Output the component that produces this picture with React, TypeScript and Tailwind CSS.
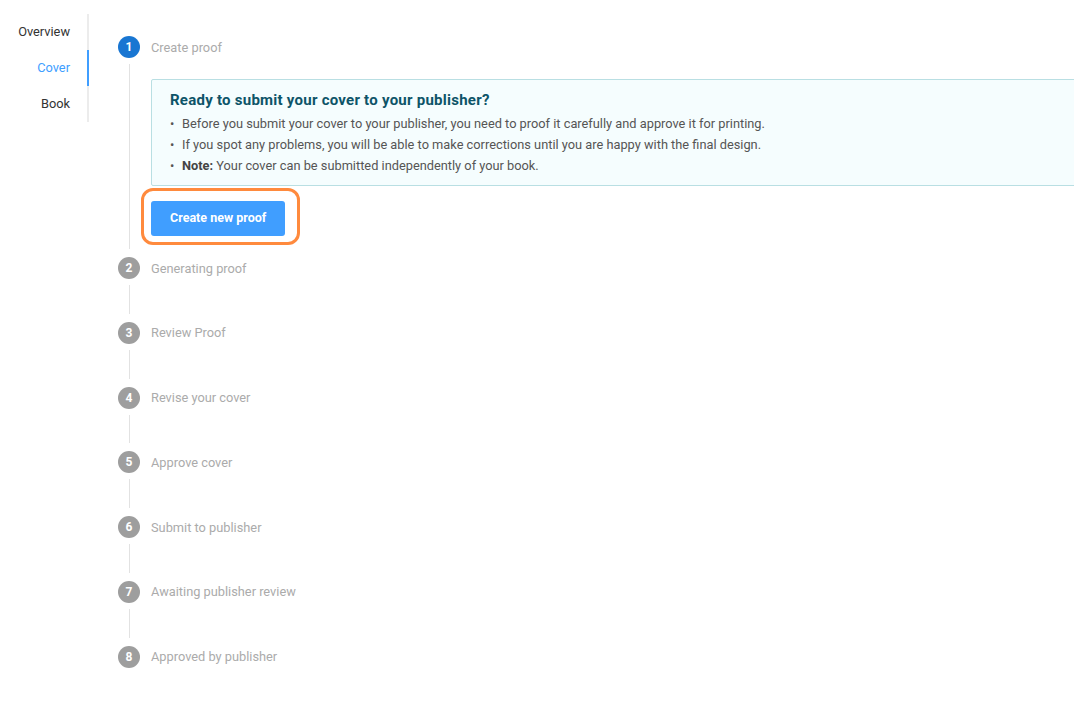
import React from "react";

const navItems = [
  { label: "Overview", active: false },
  { label: "Cover", active: true },
  { label: "Book", active: false },
];

const steps = [
  "Create proof",
  "Generating proof",
  "Review Proof",
  "Revise your cover",
  "Approve cover",
  "Submit to publisher",
  "Awaiting publisher review",
  "Approved by publisher",
];

function ProofCard() {
  return (
    <div className="pt-[21px] pb-[21px]">
      <div className="w-[940px] border border-[#b9dfe3] bg-[#f5fdfe] rounded-[2px] pl-[18px] pt-[10px] pb-[9px]">
        <h3 className="text-[15px] leading-[21px] font-bold text-[#0d5468] tracking-[0.25px]">
          Ready to submit your cover to your publisher?
        </h3>
        <ul className="mt-[2px] text-[12.8px] leading-[21px] text-[#555]">
          <li className="flex">
            <span className="w-[12px]">•</span>
            Before you submit your cover to your publisher, you need to proof it carefully and approve it for printing.
          </li>
          <li className="flex">
            <span className="w-[12px]">•</span>
            If you spot any problems, you will be able to make corrections until you are happy with the final design.
          </li>
          <li className="flex">
            <span className="w-[12px]">•</span>
            <span>
              <b className="font-bold text-[#444]">Note:</b> Your cover can be submitted independently of your book.
            </span>
          </li>
        </ul>
      </div>
      <div className="relative mt-[15px] w-fit">
        <div className="absolute -left-[10px] -top-[13px] -right-[15px] -bottom-[9px] border-[3px] border-[#ff8a3d] rounded-[12px]" />
        <button className="relative h-[35px] px-[19px] rounded-[3px] bg-[#409eff] text-white text-[12.5px] font-bold">
          Create new proof
        </button>
      </div>
    </div>
  );
}

export default function App() {
  return (
    <div
      className="w-full min-h-[702px] overflow-hidden bg-white flex"
      style={{ fontFamily: "Roboto, 'Liberation Sans', sans-serif" }}
    >
      <nav className="pt-[14px] w-[89px] shrink-0">
        {navItems.map((item) => (
          <div
            key={item.label}
            className={
              item.active
                ? "h-[36px] flex items-center justify-end pr-[17px] border-r-2 border-[#409eff] text-[12.8px] text-[#409eff]"
                : "h-[36px] flex items-center justify-end pr-[17px] border-r-2 border-[#ececec] text-[12.8px] text-[#333]"
            }
          >
            {item.label}
          </div>
        ))}
      </nav>

      <main className="ml-[29px] pt-[36px] flex-1">
        {steps.map((label, i) => {
          const first = i === 0;
          const last = i === steps.length - 1;
          return (
            <div key={label}>
              <div className="flex items-center h-[22px]">
                <div
                  className={
                    first
                      ? "w-[22px] h-[22px] rounded-full bg-[#1976d2] text-white text-[12px] font-bold flex items-center justify-center"
                      : "w-[22px] h-[22px] rounded-full bg-[#9e9e9e] text-white text-[12px] font-bold flex items-center justify-center"
                  }
                >
                  {i + 1}
                </div>
                <span className="ml-[11px] text-[12.8px] leading-[22px] pt-px text-[#ababab]">{label}</span>
              </div>
              {!last && (
                <div className="flex">
                  <div className="w-[22px] flex justify-center pt-[6px] pb-[8px]">
                    <div className="w-px bg-[#e2e2e2]" />
                  </div>
                  <div className="pl-[11px] min-h-[42.8px]">{first && <ProofCard />}</div>
                </div>
              )}
            </div>
          );
        })}
      </main>
    </div>
  );
}
